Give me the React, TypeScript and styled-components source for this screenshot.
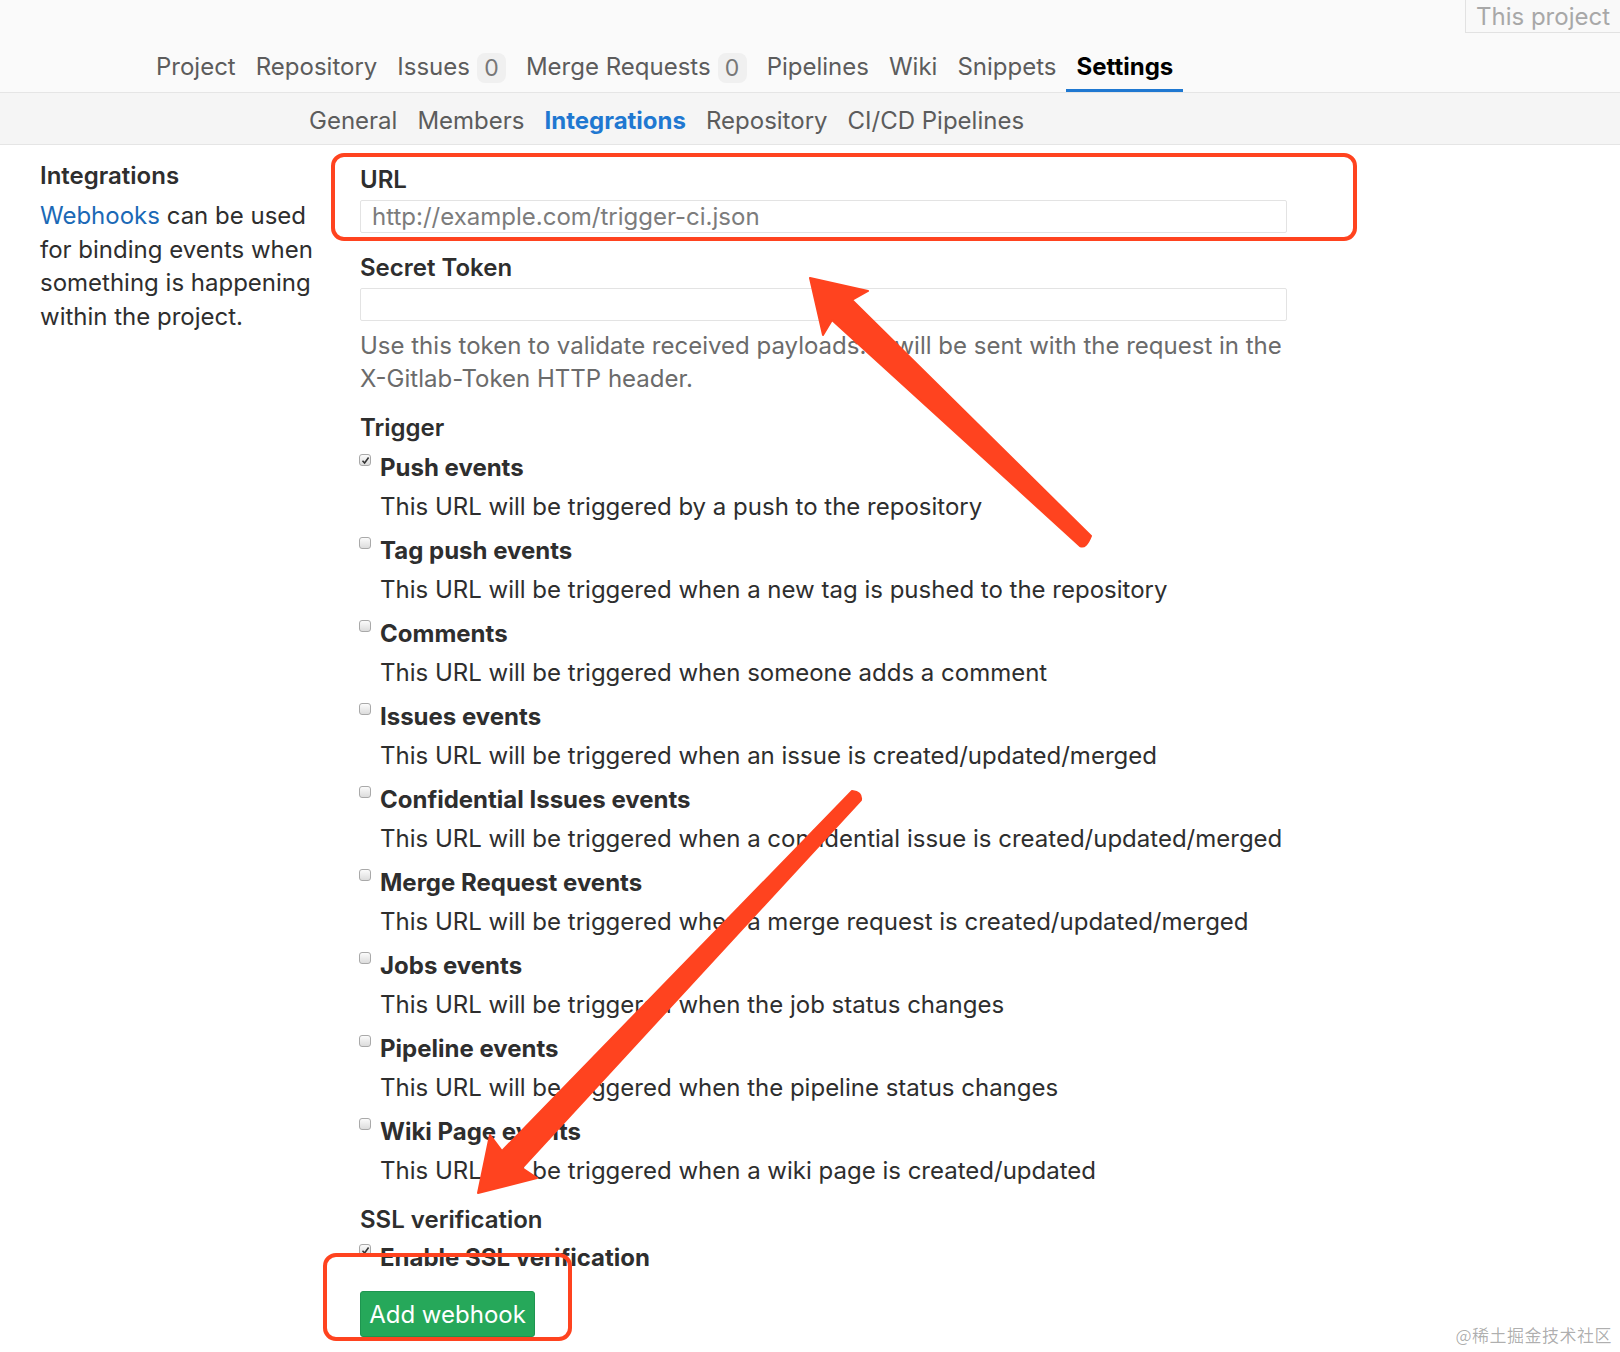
import React from 'react';
import styled, { createGlobalStyle } from 'styled-components';

const Global = createGlobalStyle`
  html, body { margin: 0; padding: 0; background: #fff; }
  body {
    width: 1620px; height: 1352px; overflow: hidden;
    font-family: Inter, "Noto Sans", "Liberation Sans", sans-serif;
    color: #2e2e2e;
    -webkit-font-smoothing: antialiased;
  }
  * { box-sizing: border-box; }
`;

const FS = 24;

const Page = styled.div`
  position: relative;
  width: 1620px;
  height: 1352px;
  overflow: hidden;
  background: #fff;
`;

const Header = styled.header`
  height: 93px;
  background: #fafafa;
  border-bottom: 1px solid #e5e5e5;
  display: flex;
  flex-direction: column;
`;

const TopStrip = styled.div`
  height: 33px;
  display: flex;
  justify-content: flex-end;
`;

const SearchBox = styled.div`
  width: 170px;
  margin-right: -15px;
  height: 33px;
  border: 1px solid #e2e2e2;
  border-top: none;
  background: #f9f9f9;
  color: #a8a8a8;
  font-size: ${FS}px;
  padding-left: 10px;
  display: flex;
  align-items: center;
`;

const Nav = styled.nav`
  display: flex;
  height: 59px;
  padding-left: 146px;
`;

const NavItem = styled.a<{ $active?: boolean }>`
  display: flex;
  align-items: center;
  height: 100%;
  padding: 10px 10px 0;
  font-size: ${FS}px;
  color: ${(p) => (p.$active ? '#000' : '#5c5c5c')};
  font-weight: ${(p) => (p.$active ? 700 : 400)};
  border-bottom: 3px solid ${(p) => (p.$active ? '#1f78d1' : 'transparent')};
  text-decoration: none;
  white-space: nowrap;
`;

const Badge = styled.span`
  display: inline-flex;
  align-items: center;
  justify-content: center;
  min-width: 29px;
  height: 30px;
  margin: 3px 0 0 7px;
  border-radius: 8px;
  background: #f0f0f0;
  color: #777;
  font-size: 23px;
`;

const SubNav = styled.nav`
  height: 52px;
  background: #f5f5f5;
  border-bottom: 1px solid #e5e5e5;
  display: flex;
  padding-left: 299px;
`;

const SubNavItem = styled.a<{ $active?: boolean }>`
  display: flex;
  align-items: center;
  padding: 3px 10px 0;
  font-size: ${FS}px;
  color: ${(p) => (p.$active ? '#1f78d1' : '#5c5c5c')};
  font-weight: ${(p) => (p.$active ? 700 : 400)};
  text-decoration: none;
  white-space: nowrap;
`;

const Main = styled.main`
  display: flex;
  padding: 14px 0 0 40px;
`;

const Side = styled.aside`
  width: 290px;
  margin-right: 30px;
  font-size: ${FS}px;
`;

const SideTitle = styled.h4`
  margin: 0;
  font-size: ${FS}px;
  font-weight: 600;
  line-height: 34px;
`;

const SideText = styled.p`
  margin: 6px 0 0;
  line-height: 33.5px;
`;

const Link = styled.a`
  color: #1b69b6;
  text-decoration: none;
`;

const Form = styled.form`
  width: 927px;
  padding-top: 4px;
  font-size: ${FS}px;
`;

const Label = styled.div<{ $gap?: number }>`
  font-weight: 600;
  line-height: 34px;
  margin-top: ${(p) => p.$gap ?? 0}px;
`;

const Input = styled.input`
  display: block;
  width: 100%;
  height: 33px;
  margin-top: 3px;
  border: 1px solid #e3e3e3;
  border-radius: 2px;
  padding: 0 11px;
  font: inherit;
  font-size: ${FS}px;
  color: #2e2e2e;
  background: #fff;
  &::placeholder { color: #7c7c7c; }
`;

const Help = styled.p`
  margin: 8px 0 0;
  color: #6b6b6b;
  line-height: 33px;
`;

const Option = styled.div<{ $gap?: number }>`
  margin-top: ${(p) => p.$gap ?? 10}px;
`;

const OptionRow = styled.label`
  display: flex;
  align-items: flex-start;
  font-weight: 700;
  line-height: 34px;
`;

const Box = styled.span<{ $checked?: boolean }>`
  flex: none;
  width: 12px;
  height: 12px;
  margin: 3px 9px 0 -1px;
  border: 1px solid #a9a9a9;
  border-radius: 3px;
  background: linear-gradient(#fbfbfb, #dcdcdc);
  display: flex;
  align-items: center;
  justify-content: center;
`;

const Desc = styled.div`
  margin-top: 5px;
  padding-left: 20px;
  line-height: 34px;
  font-weight: 400;
`;

const Button = styled.button`
  display: flex;
  align-items: center;
  justify-content: center;
  margin-top: 16px;
  width: 175px;
  height: 46px;
  background: #26a85a;
  border: 1px solid #1e9550;
  border-radius: 3px;
  color: #fff;
  font: inherit;
  font-size: ${FS}px;
`;

const Overlay = styled.svg`
  position: absolute;
  left: 0;
  top: 0;
  pointer-events: none;
`;

const Watermark = styled.div`
  position: absolute;
  right: 8px;
  bottom: 5px;
  font-family: "Noto Sans CJK SC", sans-serif;
  font-size: 17px;
  color: rgba(0, 0, 0, 0.32);
  letter-spacing: 0.5px;
`;

const Check = () => (
  <svg width="9" height="9" viewBox="0 0 9 9">
    <path d="M1.5 4.8 L3.6 7 L7.6 1.6" fill="none" stroke="#333" strokeWidth="1.6" />
  </svg>
);

const events: [string, string, boolean][] = [
  ['Push events', 'This URL will be triggered by a push to the repository', true],
  ['Tag push events', 'This URL will be triggered when a new tag is pushed to the repository', false],
  ['Comments', 'This URL will be triggered when someone adds a comment', false],
  ['Issues events', 'This URL will be triggered when an issue is created/updated/merged', false],
  ['Confidential Issues events', 'This URL will be triggered when a confidential issue is created/updated/merged', false],
  ['Merge Request events', 'This URL will be triggered when a merge request is created/updated/merged', false],
  ['Jobs events', 'This URL will be triggered when the job status changes', false],
  ['Pipeline events', 'This URL will be triggered when the pipeline status changes', false],
  ['Wiki Page events', 'This URL will be triggered when a wiki page is created/updated', false],
];

const RED = '#ff431f';

export default function App() {
  return (
    <Page>
      <Global />
      <Header>
        <TopStrip>
          <SearchBox>This project</SearchBox>
        </TopStrip>
        <Nav>
          <NavItem>Project</NavItem>
          <NavItem>Repository</NavItem>
          <NavItem>Issues<Badge>0</Badge></NavItem>
          <NavItem>Merge Requests<Badge>0</Badge></NavItem>
          <NavItem>Pipelines</NavItem>
          <NavItem>Wiki</NavItem>
          <NavItem>Snippets</NavItem>
          <NavItem $active>Settings</NavItem>
        </Nav>
      </Header>
      <SubNav>
        <SubNavItem>General</SubNavItem>
        <SubNavItem>Members</SubNavItem>
        <SubNavItem $active>Integrations</SubNavItem>
        <SubNavItem>Repository</SubNavItem>
        <SubNavItem>CI/CD Pipelines</SubNavItem>
      </SubNav>
      <Main>
        <Side>
          <SideTitle>Integrations</SideTitle>
          <SideText>
            <Link>Webhooks</Link> can be used<br />for binding events when<br />something is happening<br />within the project.
          </SideText>
        </Side>
        <Form>
          <Label>URL</Label>
          <Input placeholder="http://example.com/trigger-ci.json" />
          <Label $gap={18}>Secret Token</Label>
          <Input />
          <Help>
            Use this token to validate received payloads. It will be sent with the request in the<br />X-Gitlab-Token HTTP header.
          </Help>
          <Label $gap={16}>Trigger</Label>
          {events.map(([title, desc, checked], i) => (
            <Option key={title} $gap={i === 0 ? 6 : 10}>
              <OptionRow>
                <Box $checked={checked}>{checked && <Check />}</Box>
                {title}
              </OptionRow>
              <Desc>{desc}</Desc>
            </Option>
          ))}
          <Label $gap={15}>SSL verification</Label>
          <Option $gap={4}>
            <OptionRow>
              <Box $checked>
                <Check />
              </Box>
              Enable SSL verification
            </OptionRow>
          </Option>
          <Button type="button">Add webhook</Button>
        </Form>
      </Main>

      <Overlay width="1620" height="1352" viewBox="0 0 1620 1352">
        <rect x="333" y="155" width="1022" height="84" rx="11" fill="none" stroke={RED} strokeWidth="4" />
        <rect x="325" y="1255" width="245" height="84" rx="11" fill="none" stroke={RED} strokeWidth="4" />
        <path
          d="M810 278 L868 291 L852 300 L1091 536 Q1086 549 1080 546 L832 320 L823 335 Z"
          fill={RED}
          stroke={RED}
          strokeWidth="2"
          strokeLinejoin="round"
        />
        <path
          d="M478 1193 L490 1135 L502 1151 L852 791 Q862 792 861 800 L522 1168 L537 1178 Z"
          fill={RED}
          stroke={RED}
          strokeWidth="2"
          strokeLinejoin="round"
        />
      </Overlay>
      <Watermark>@稀土掘金技术社区</Watermark>
    </Page>
  );
}
